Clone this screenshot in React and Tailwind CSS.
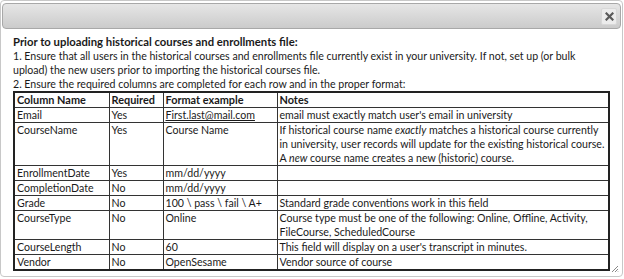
export default function App() {
  const rows = [
    { n: "Email", r: "Yes", f: <span className="underline">First.last@mail.com</span>, notes: "email must exactly match user's email in university" },
    {
      n: "CourseName",
      r: "Yes",
      f: "Course Name",
      notes: (
        <>
          If historical course name <i>exactly</i> matches a historical course currently
          <br />
          in university, user records will update for the existing historical course.
          <br />A <i>new</i> course name creates a new (historic) course.
        </>
      ),
    },
    { n: "EnrollmentDate", r: "Yes", f: "mm/dd/yyyy", notes: "\u00a0" },
    { n: "CompletionDate", r: "No", f: "mm/dd/yyyy", notes: "\u00a0" },
    { n: "Grade", r: "No", f: "100 \\ pass \\ fail \\ A+", notes: "Standard grade conventions work in this field" },
    {
      n: "CourseType",
      r: "No",
      f: "Online",
      notes: (
        <>
          Course type must be one of the following: Online, Offline, Activity,
          <br />
          FileCourse, ScheduledCourse
        </>
      ),
    },
    { n: "CourseLength", r: "No", f: "60", notes: "This field will display on a user's transcript in minutes." },
    { n: "Vendor", r: "No", f: "OpenSesame", notes: "Vendor source of course" },
  ];
  const cell = "border border-[#333] px-[2px] py-0 align-top text-left overflow-hidden";
  return (
    <div className="w-[624px] h-[279px] bg-white overflow-hidden" style={{ fontFamily: 'Lato, "Open Sans", sans-serif' }}>
      <div className="relative w-[623px] h-[277px] border border-[#c8c8c8] rounded-[4px] bg-white">
        <div className="mx-[1px] mt-[2px] h-[26px] rounded-[4px] border border-[#a8a8a8] bg-gradient-to-b from-[#e6e6e6] to-[#cbcbcb] flex items-center justify-end pr-[3px]">
          <div className="w-[16px] h-[17px] rounded-[2px] bg-[#ececec] border border-[#d8d8d8] flex items-center justify-center">
            <svg width="9" height="9" viewBox="0 0 9 9">
              <path d="M1.5 1.5 L7.5 7.5 M7.5 1.5 L1.5 7.5" stroke="#5a5a5a" strokeWidth="2.2" strokeLinecap="square" />
            </svg>
          </div>
        </div>
        <div className="pl-[12px] pr-[12px] pt-[6px] text-[10.6px] leading-[14.1px] text-[#1a1a1a] whitespace-nowrap">
          <div className="font-bold text-[11.3px]">Prior to uploading historical courses and enrollments file:</div>
          <div>1. Ensure that all users in the historical courses and enrollments file currently exist in your university. If not, set up (or bulk</div>
          <div>upload) the new users prior to importing the historical courses file.</div>
          <div>2. Ensure the required columns are completed for each row and in the proper format:</div>
          <table className="w-[597px] table-fixed border-collapse border-2 border-[#222] leading-[14px]">
            <colgroup>
              <col className="w-[95px]" />
              <col className="w-[54px]" />
              <col className="w-[114px]" />
              <col />
            </colgroup>
            <thead>
              <tr className="font-bold text-[10.9px]">
                <th className={cell}>Column Name</th>
                <th className={cell}>Required</th>
                <th className={cell}>Format example</th>
                <th className={cell}>Notes</th>
              </tr>
            </thead>
            <tbody>
              {rows.map((row) => (
                <tr key={row.n}>
                  <td className={cell}>{row.n}</td>
                  <td className={cell}>{row.r}</td>
                  <td className={cell}>{row.f}</td>
                  <td className={cell}>{row.notes}</td>
                </tr>
              ))}
            </tbody>
          </table>
        </div>
        <svg className="absolute right-[3px] bottom-[3px]" width="8" height="8" viewBox="0 0 8 8">
          <path d="M7 1 L1 7 M7 4 L4 7 M7 6.5 L6.5 7" stroke="#888" strokeWidth="1" />
        </svg>
      </div>
    </div>
  );
}
